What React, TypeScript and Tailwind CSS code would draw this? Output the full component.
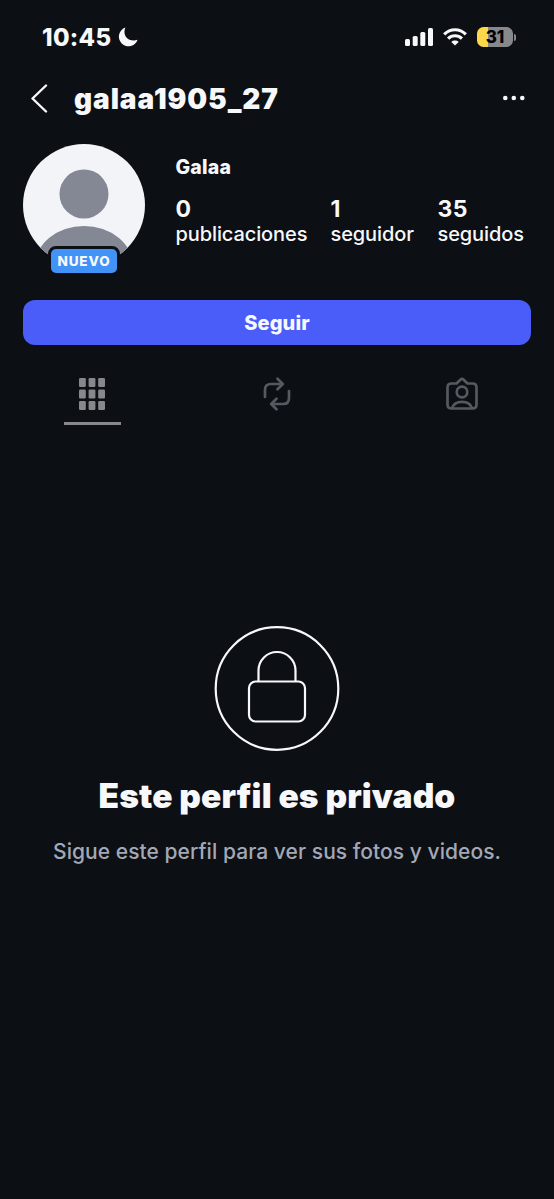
type Stat = {
  value: string;
  label: string;
  width: string;
};

const stats: Stat[] = [
  { value: "0", label: "publicaciones", width: "w-[155px]" },
  { value: "1", label: "seguidor", width: "w-[107px]" },
  { value: "35", label: "seguidos", width: "w-[90px]" },
];

function StatusBar() {
  return (
    <div className="flex h-[74px] items-center justify-between pl-[42px] pr-[38px]">
      <div className="flex items-center">
        <span className="w-[76px] pt-px text-[24px] font-extrabold leading-none tracking-[0.3px]">10:45</span>
        <svg width="20" height="20" viewBox="0 0 20 20" fill="currentColor">
          <path d="M7.4 0.6A9.6 9.6 0 1 0 19.6 12.7C12 15.6 3.6 9.6 7.4 0.6Z" />
        </svg>
      </div>
      <div className="flex items-center">
        <svg width="28" height="18" viewBox="0 0 28 18" fill="currentColor">
          <rect x="0" y="11" width="5" height="7" rx="1.5" />
          <rect x="7.7" y="8" width="5" height="10" rx="1.5" />
          <rect x="15.3" y="4" width="5" height="14" rx="1.5" />
          <rect x="23" y="0" width="5" height="18" rx="1.5" />
        </svg>
        <svg className="ml-[10px]" width="24" height="18" viewBox="0 0 24 18" fill="none" stroke="currentColor" strokeWidth="3.2">
          <path d="M1.2 6.4C7.3 0.2 16.7 0.2 22.8 6.4" />
          <path d="M5.1 10.6C9 6.8 15 6.8 18.9 10.6" />
          <path d="M12 17.6L8.3 14C10.4 12.1 13.6 12.1 15.7 14Z" fill="currentColor" stroke="none" />
        </svg>
        <div className="ml-[10px] flex h-5 w-9 items-center justify-center rounded-[6.5px] bg-[linear-gradient(to_right,#fbd84a_31%,#87888c_31%)]">
          <span className="text-[17px] font-extrabold leading-none text-black">31</span>
        </div>
        <div className="ml-px h-[7px] w-[2px] rounded-r-full bg-[#87888c]" />
      </div>
    </div>
  );
}

function Header() {
  return (
    <header className="flex h-12 items-center pl-[31px] pr-[29px]">
      <svg width="17" height="29" viewBox="0 0 17 29" fill="none" stroke="currentColor" strokeWidth="2.4" strokeLinecap="round" strokeLinejoin="round">
        <path d="M15 1.5L1.5 14.5L15 27.5" />
      </svg>
      <h1 className="ml-[26px] pt-px text-[28px] font-black leading-none tracking-[0.9px]">galaa1905_27</h1>
      <svg className="ml-auto" width="22" height="6" viewBox="0 0 22 6" fill="currentColor">
        <circle cx="2.3" cy="3" r="2.3" />
        <circle cx="10.8" cy="3" r="2.3" />
        <circle cx="19.3" cy="3" r="2.3" />
      </svg>
    </header>
  );
}

function Avatar() {
  return (
    <div className="relative h-[122px] w-[122px] shrink-0">
      <div className="h-full w-full overflow-hidden rounded-full bg-[#f3f4f7]">
        <svg width="122" height="122" viewBox="0 0 122 122" fill="#848895">
          <circle cx="61" cy="50" r="24.5" />
          <ellipse cx="61" cy="122" rx="49" ry="40" />
        </svg>
      </div>
      <span className="absolute left-[25px] top-[102px] flex h-[30px] w-[72px] items-center justify-center rounded-lg border-[3px] border-[#0c0f14] bg-[#4193f7] pt-px text-[13.5px] font-extrabold leading-none tracking-[0.9px]">
        NUEVO
      </span>
    </div>
  );
}

function Profile() {
  return (
    <section className="flex pl-[23px] pt-[22px]">
      <Avatar />
      <div className="ml-[30.5px] pt-[11px]">
        <p className="text-[19.5px] font-extrabold leading-6 tracking-[0.2px]">Galaa</p>
        <div className="mt-[18px] flex">
          {stats.map((stat) => (
            <div key={stat.label} className={stat.width}>
              <p className="text-[23px] font-bold leading-6 tracking-[0.3px]">{stat.value}</p>
              <p className="text-[20px] font-medium leading-[26px] tracking-[-0.1px]">{stat.label}</p>
            </div>
          ))}
        </div>
      </div>
    </section>
  );
}

function Tabs() {
  return (
    <nav className="mt-[30px] grid grid-cols-3 justify-items-center">
      <div className="flex h-[50px] w-[57px] flex-col items-center justify-between border-b-[3px] border-[#87888c]">
        <svg className="mt-[3px]" width="26" height="32" viewBox="0 0 26 32" fill="#87888c">
          {[0, 11.5, 23].map((y) =>
            [0, 9.6, 19.2].map((x) => (
              <rect key={`${x}-${y}`} x={x} y={y} width="6.8" height="9" rx="1.2" />
            ))
          )}
        </svg>
      </div>
      <svg className="mt-[2px]" width="28" height="34" viewBox="0 0 28 34" fill="none" stroke="#555960" strokeWidth="2.7" strokeLinecap="round" strokeLinejoin="round">
        <path d="M2 20V13Q2 7 8 7H19" />
        <path d="M14.5 1.8L19.8 7L14.5 12.2" />
        <path d="M26 14V21Q26 27 20 27H9" />
        <path d="M13.5 21.8L8.2 27L13.5 32.2" />
      </svg>
      <svg className="mt-[2px]" width="32" height="34" viewBox="0 0 32 34" fill="none" stroke="#555960" strokeWidth="2.7" strokeLinecap="round" strokeLinejoin="round">
        <path d="M5.5 6.5H10.5L14.6 2.5Q16 1.2 17.4 2.5L21.5 6.5H26.5Q30.5 6.5 30.5 10.5V27.5Q30.5 31.5 26.5 31.5H5.5Q1.5 31.5 1.5 27.5V10.5Q1.5 6.5 5.5 6.5Z" />
        <circle cx="16" cy="15" r="5.3" />
        <path d="M6 31C7.5 26.8 11 24.8 16 24.8S24.5 26.8 26 31" />
      </svg>
    </nav>
  );
}

function PrivateNotice() {
  return (
    <section className="mt-[201px] flex flex-col items-center">
      <svg width="126" height="126" viewBox="0 0 126 126" fill="none" stroke="currentColor" strokeWidth="2.2">
        <circle cx="63" cy="62.5" r="61.3" />
        <rect x="35" y="55.5" width="56" height="40" rx="6.5" />
        <path d="M44.5 55.5V44.5A18.5 18.5 0 0 1 81.5 44.5V55.5" />
      </svg>
      <h2 className="mt-[25px] text-[33.5px] font-black leading-[38px] tracking-[0.1px]">Este perfil es privado</h2>
      <p className="mt-[23px] text-[21px] font-medium leading-7 tracking-[0.05px] text-[#a3a8b5]">
        Sigue este perfil para ver sus fotos y videos.
      </p>
    </section>
  );
}

export default function App() {
  return (
    <main className="h-[1199px] w-[554px] overflow-hidden bg-[#0c0f14] font-[Inter,'Liberation_Sans',sans-serif] text-[#f7f8fa]">
      <StatusBar />
      <Header />
      <Profile />
      <div className="px-[23px] pt-[34px]">
        <button className="h-[45px] w-full rounded-xl bg-[#4a5df9] text-[20px] font-extrabold tracking-[0.1px]">Seguir</button>
      </div>
      <Tabs />
      <PrivateNotice />
    </main>
  );
}
